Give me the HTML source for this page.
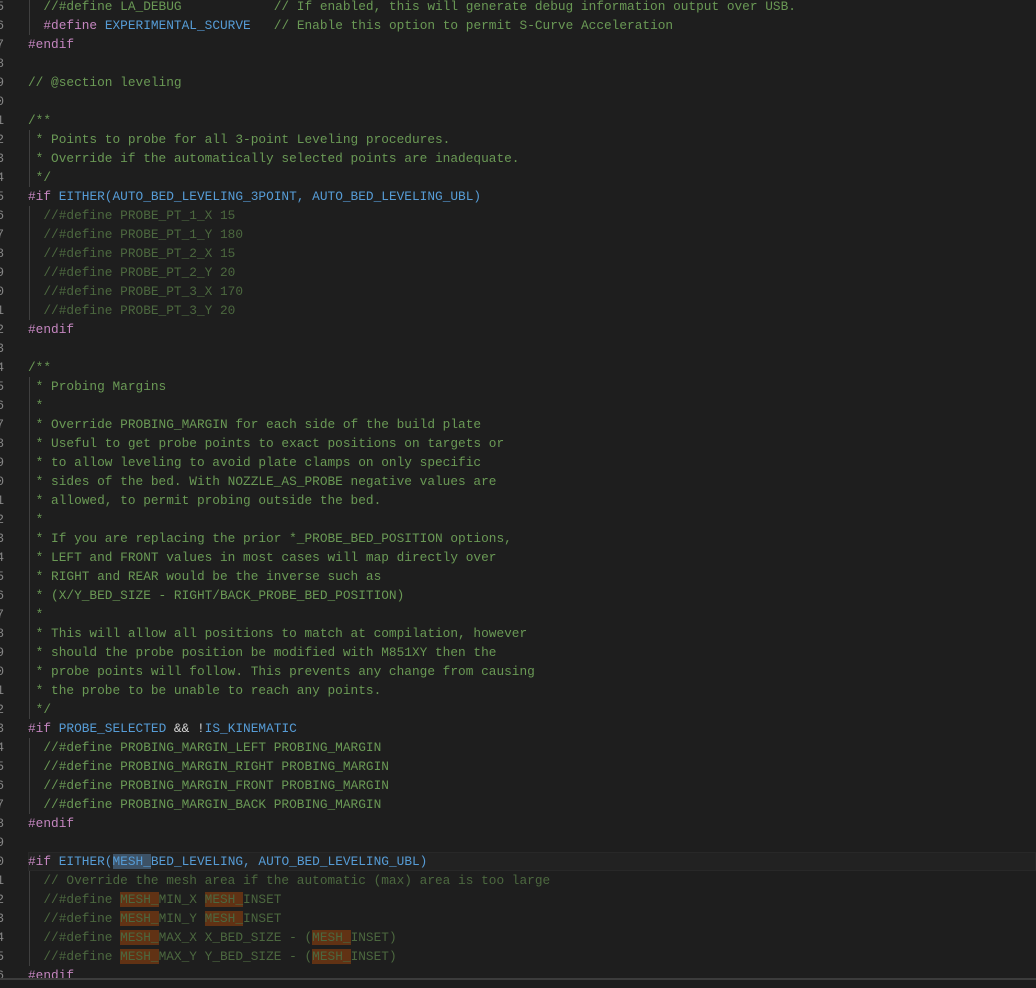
<!DOCTYPE html>
<html><head><meta charset="utf-8"><style>
html,body{margin:0;padding:0;background:#1e1e1e;width:1036px;height:988px;overflow:hidden}
#ed{position:absolute;left:0;top:0;width:1036px;height:978px;overflow:hidden}
.l{position:absolute;left:28px;height:19px;line-height:19px;white-space:pre;font-family:"Liberation Mono",monospace;font-size:12.8px;color:#d4d4d4}
.n{position:absolute;width:20px;left:-16px;text-align:right;height:19px;line-height:19px;font-family:"Liberation Mono",monospace;font-size:12.8px;color:#858585}
.c{color:#6a9955}.p{color:#c586c0}.m{color:#569cd6}.d{color:#4c683f}
.g{position:absolute;width:1px;background:#404040}
.o{background:#613214}.s{background:#3d5266}
#cur{position:absolute;left:28px;right:0;top:852px;height:17px;border:1px solid #282828;background:#222}
#bot{position:absolute;left:0;top:978px;width:1036px;height:2px;background:#3c3c3c}
</style></head><body>
<div id="ed">
<div id="cur"></div>
<div class="g" style="left:29px;top:130px;height:57px"></div>
<div class="g" style="left:29px;top:206px;height:114px"></div>
<div class="g" style="left:29px;top:377px;height:342px"></div>
<div class="g" style="left:29px;top:738px;height:76px"></div>
<div class="g" style="left:29px;top:871px;height:95px"></div>
<div class="g" style="left:29px;top:-3px;height:38px"></div>
<div id="lines"></div>
</div>
<div id="bot"></div>
<script>
var L=[
'  <span class="c">//#define LA_DEBUG            // If enabled, this will generate debug information output over USB.</span>',
'  <span class="p">#define</span> <span class="m">EXPERIMENTAL_SCURVE</span>   <span class="c">// Enable this option to permit S-Curve Acceleration</span>',
'<span class="p">#endif</span>','',
'<span class="c">// @section leveling</span>','',
'<span class="c">/**</span>',
'<span class="c"> * Points to probe for all 3-point Leveling procedures.</span>',
'<span class="c"> * Override if the automatically selected points are inadequate.</span>',
'<span class="c"> */</span>',
'<span class="p">#if</span> <span class="m">EITHER(AUTO_BED_LEVELING_3POINT, AUTO_BED_LEVELING_UBL)</span>',
'  <span class="d">//#define PROBE_PT_1_X 15</span>',
'  <span class="d">//#define PROBE_PT_1_Y 180</span>',
'  <span class="d">//#define PROBE_PT_2_X 15</span>',
'  <span class="d">//#define PROBE_PT_2_Y 20</span>',
'  <span class="d">//#define PROBE_PT_3_X 170</span>',
'  <span class="d">//#define PROBE_PT_3_Y 20</span>',
'<span class="p">#endif</span>','',
'<span class="c">/**</span>',
'<span class="c"> * Probing Margins</span>',
'<span class="c"> *</span>',
'<span class="c"> * Override PROBING_MARGIN for each side of the build plate</span>',
'<span class="c"> * Useful to get probe points to exact positions on targets or</span>',
'<span class="c"> * to allow leveling to avoid plate clamps on only specific</span>',
'<span class="c"> * sides of the bed. With NOZZLE_AS_PROBE negative values are</span>',
'<span class="c"> * allowed, to permit probing outside the bed.</span>',
'<span class="c"> *</span>',
'<span class="c"> * If you are replacing the prior *_PROBE_BED_POSITION options,</span>',
'<span class="c"> * LEFT and FRONT values in most cases will map directly over</span>',
'<span class="c"> * RIGHT and REAR would be the inverse such as</span>',
'<span class="c"> * (X/Y_BED_SIZE - RIGHT/BACK_PROBE_BED_POSITION)</span>',
'<span class="c"> *</span>',
'<span class="c"> * This will allow all positions to match at compilation, however</span>',
'<span class="c"> * should the probe position be modified with M851XY then the</span>',
'<span class="c"> * probe points will follow. This prevents any change from causing</span>',
'<span class="c"> * the probe to be unable to reach any points.</span>',
'<span class="c"> */</span>',
'<span class="p">#if</span> <span class="m">PROBE_SELECTED</span> &amp;&amp; !<span class="m">IS_KINEMATIC</span>',
'  <span class="c">//#define PROBING_MARGIN_LEFT PROBING_MARGIN</span>',
'  <span class="c">//#define PROBING_MARGIN_RIGHT PROBING_MARGIN</span>',
'  <span class="c">//#define PROBING_MARGIN_FRONT PROBING_MARGIN</span>',
'  <span class="c">//#define PROBING_MARGIN_BACK PROBING_MARGIN</span>',
'<span class="p">#endif</span>','',
'<span class="p">#if</span> <span class="m">EITHER(<span class="s">MESH_</span>BED_LEVELING, AUTO_BED_LEVELING_UBL)</span>',
'  <span class="d">// Override the mesh area if the automatic (max) area is too large</span>',
'  <span class="d">//#define <span class="o">MESH_</span>MIN_X <span class="o">MESH_</span>INSET</span>',
'  <span class="d">//#define <span class="o">MESH_</span>MIN_Y <span class="o">MESH_</span>INSET</span>',
'  <span class="d">//#define <span class="o">MESH_</span>MAX_X X_BED_SIZE - (<span class="o">MESH_</span>INSET)</span>',
'  <span class="d">//#define <span class="o">MESH_</span>MAX_Y Y_BED_SIZE - (<span class="o">MESH_</span>INSET)</span>',
'<span class="p">#endif</span>'
];
var h='';
for(var i=0;i<L.length;i++){var t=-3+19*i;
h+='<div class="l" style="top:'+t+'px">'+L[i]+'</div><div class="n" style="top:'+t+'px">'+((i+5)%10)+'</div>';}
document.getElementById('lines').innerHTML=h;
</script>
</body></html>
